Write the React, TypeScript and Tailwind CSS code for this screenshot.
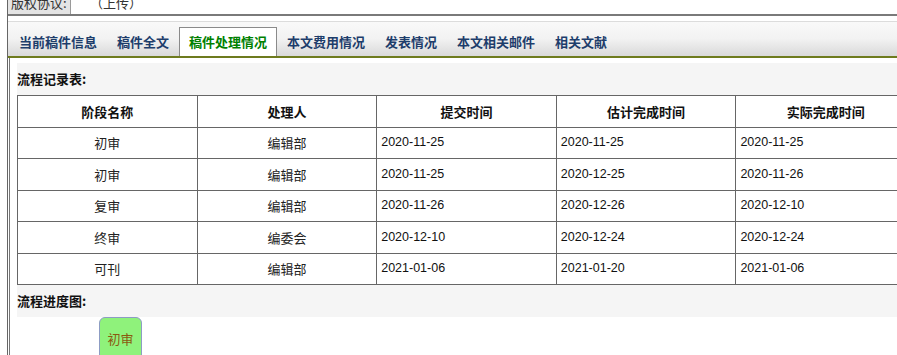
import React from 'react';

const cjk = '[font-family:"Noto_Sans_CJK_SC","Microsoft_YaHei",sans-serif]';

const tabs = ['当前稿件信息', '稿件全文', '稿件处理情况', '本文费用情况', '发表情况', '本文相关邮件', '相关文献'];

const rows = [
  ['初审', '编辑部', '2020-11-25', '2020-11-25', '2020-11-25'],
  ['初审', '编辑部', '2020-11-25', '2020-12-25', '2020-11-26'],
  ['复审', '编辑部', '2020-11-26', '2020-12-26', '2020-12-10'],
  ['终审', '编委会', '2020-12-10', '2020-12-24', '2020-12-24'],
  ['可刊', '编辑部', '2021-01-06', '2021-01-20', '2021-01-06'],
];

const headers = ['阶段名称', '处理人', '提交时间', '估计完成时间', '实际完成时间'];

export default function App() {
  return (
    <div className={`w-[897px] h-[355px] overflow-hidden bg-white text-[13px] text-[#222] ${cjk}`}>
      <div className="ml-[7px] h-full border-l border-[#666] flex flex-col">
        {/* top strip, scrolled half out of view */}
        <div className="flex h-[16px] shrink-0 overflow-hidden border-b-2 border-[#7a7a7a]">
          <div className="w-[63px] h-[22px] -mt-[8px] leading-[22px] bg-[#e4e4e4] border-r border-[#9a9a9a] text-[#333] pl-[3px] whitespace-nowrap">
            版权协议:
          </div>
          <div className="h-[22px] -mt-[8px] leading-[22px] pl-[19px] text-[#333] whitespace-nowrap">（上传）</div>
        </div>
        <div className="h-[5px] shrink-0" />

        {/* tab bar */}
        <div className="h-[37px] shrink-0 border-t border-[#dcdcdc] border-b-2 border-b-[#6e7b1e] bg-gradient-to-b from-[#f9f9f9] via-[#f2f2f2] to-[#d9d9d9] flex items-end pl-px">
          {tabs.map((t, i) =>
            i === 2 ? (
              <div
                key={t}
                className="h-[29px] px-[9px] flex items-center bg-white border border-b-0 border-[#8a8a8a] font-bold text-[#008000] whitespace-nowrap"
              >
                {t}
              </div>
            ) : (
              <div
                key={t}
                className="h-[29px] px-[9px] flex items-center border border-transparent font-bold text-[#1d3d6b] whitespace-nowrap"
              >
                {t}
              </div>
            )
          )}
        </div>

        {/* content */}
        <div className="flex-1 ml-px border-l border-[#777] pl-[7px] pt-[5px] overflow-hidden">
          <div className="bg-[#f5f5f5] h-[32px] flex items-center font-bold text-[#111]">流程记录表:</div>
          <table className="table-fixed border-collapse w-[898px] bg-white">
            <tbody>
              <tr className="h-[31.5px]">
                {headers.map((h) => (
                  <th key={h} className="w-[179.6px] border border-[#666] font-bold text-center text-[#111] p-0">
                    {h}
                  </th>
                ))}
              </tr>
              {rows.map((r, i) => (
                <tr key={i} className="h-[31.5px]">
                  <td className="border border-[#666] text-center p-0">{r[0]}</td>
                  <td className="border border-[#666] text-center p-0">{r[1]}</td>
                  {r.slice(2).map((d, j) => (
                    <td key={j} className='border border-[#666] pl-[4px] p-0 text-[12.5px] [font-family:"Liberation_Sans",Arial,sans-serif] text-[#111]'>
                      {d}
                    </td>
                  ))}
                </tr>
              ))}
            </tbody>
          </table>
          <div className="bg-[#f5f5f5] h-[32px] flex items-center font-bold text-[#111]">流程进度图:</div>
          <div className="pl-[82px]">
            <div className="w-[43px] h-[44px] rounded-[6px] border border-[#8d9cc4] bg-[#8ff27b] text-[#8a5a10] flex items-center justify-center">
              初审
            </div>
          </div>
        </div>
      </div>
    </div>
  );
}
